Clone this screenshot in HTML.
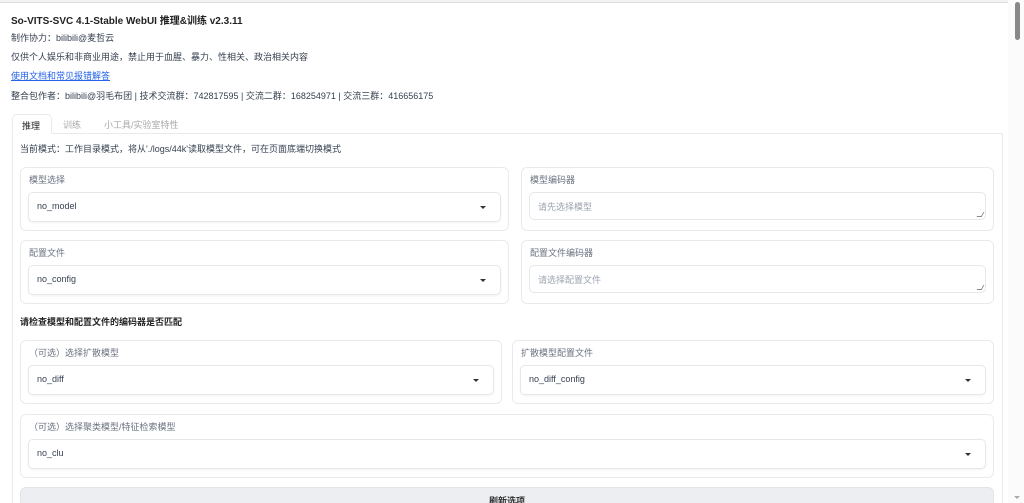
<!DOCTYPE html>
<html><head><meta charset="utf-8"><style>
*{box-sizing:border-box;margin:0;padding:0}
html,body{width:1024px;height:503px;overflow:hidden}
body{background:#fff;font-family:"Liberation Sans","Noto Sans CJK SC",sans-serif;color:#374151;font-size:9px;position:relative}
.a{position:absolute;white-space:nowrap}
.top{left:0;top:0;width:1008px;height:3px;border-bottom:1px solid #ddd;background:#f3f3f3}
.blk{position:absolute;border:1px solid #e8eaee;border-radius:6px;background:#fff}
.lbl{position:absolute;left:8px;top:5px;color:#6b7280;font-size:9px}
.sel{position:absolute;left:7px;right:7px;top:24px;height:30px;border:1px solid #e5e7eb;border-radius:5px;box-shadow:0 1px 2px rgba(0,0,0,.05);padding:8px 0 0 8px;color:#374151;font-size:9px}
.sel:after{content:"";position:absolute;right:14px;top:13px;border-left:3px solid transparent;border-right:3px solid transparent;border-top:3px solid #333}
.ta{position:absolute;left:7px;right:7px;top:24px;height:28px;border:1px solid #e5e7eb;border-radius:5px;padding:7px 0 0 8px;color:#9ca3af}
.ta:after{content:"";position:absolute;right:2px;bottom:2px;width:4px;height:4px;border-right:1px solid #888;border-bottom:1px solid #888;transform:skewX(-30deg)}
</style></head><body>
<div class="a top"></div>
<div class="a" style="left:11px;top:12px;font-size:10px;font-weight:bold;color:#222">So-VITS-SVC 4.1-Stable WebUI 推理&amp;训练 v2.3.11</div>
<div class="a" style="left:11px;top:31px">制作协力：bilibili@麦哲云</div>
<div class="a" style="left:11px;top:50px">仅供个人娱乐和非商业用途，禁止用于血腥、暴力、性相关、政治相关内容</div>
<div class="a" style="left:11px;top:69px;color:#2563eb;text-decoration:underline">使用文档和常见报错解答</div>
<div class="a" style="left:11px;top:89px">整合包作者：bilibili@羽毛布团 | 技术交流群：742817595 | 交流二群：168254971 | 交流三群：416656175</div>
<div class="a" style="left:12px;top:133px;width:991px;height:370px;border:1px solid #e8eaee;border-bottom:none"></div>
<div class="a" style="left:12px;top:114px;width:40px;height:20px;border:1px solid #e8eaee;border-bottom:1px solid #fff;border-radius:5px 5px 0 0;background:#fff;padding:4px 0 0 9px;color:#222">推理</div>
<div class="a" style="left:63px;top:118px;color:#aaa">训练</div>
<div class="a" style="left:104px;top:118px;color:#aaa">小工具/实验室特性</div>
<div class="a" style="left:20px;top:142px">当前模式：工作目录模式，将从'./logs/44k'读取模型文件，可在页面底端切换模式</div>
<div class="blk" style="left:20px;top:167px;width:489px;height:64px"><div class="lbl">模型选择</div><div class="sel">no_model</div></div>
<div class="blk" style="left:521px;top:167px;width:473px;height:64px"><div class="lbl">模型编码器</div><div class="ta">请先选择模型</div></div>
<div class="blk" style="left:20px;top:240px;width:489px;height:64px"><div class="lbl">配置文件</div><div class="sel">no_config</div></div>
<div class="blk" style="left:521px;top:240px;width:473px;height:64px"><div class="lbl">配置文件编码器</div><div class="ta">请选择配置文件</div></div>
<div class="a" style="left:20px;top:315px;font-weight:bold;color:#222">请检查模型和配置文件的编码器是否匹配</div>
<div class="blk" style="left:20px;top:340px;width:482px;height:64px"><div class="lbl">（可选）选择扩散模型</div><div class="sel">no_diff</div></div>
<div class="blk" style="left:512px;top:340px;width:482px;height:64px"><div class="lbl">扩散模型配置文件</div><div class="sel">no_diff_config</div></div>
<div class="blk" style="left:20px;top:414px;width:974px;height:64px"><div class="lbl">（可选）选择聚类模型/特征检索模型</div><div class="sel">no_clu</div></div>
<div class="a" style="left:20px;top:487px;width:974px;height:16px;background:#eceef2;border:1px solid #e2e4e8;border-bottom:none;border-radius:6px 6px 0 0;text-align:center;padding-top:6px;font-weight:bold;color:#333">刷新选项</div>
<div class="a" style="left:1008px;top:0;width:16px;height:503px;background:#fbfbfb"></div>
<div class="a" style="left:1015px;top:2px;width:5px;height:38px;background:#888;border-radius:3px"></div>
<div class="a" style="left:1014px;top:496px;border-left:3px solid transparent;border-right:3px solid transparent;border-top:3px solid #aaa"></div>
</body></html>
